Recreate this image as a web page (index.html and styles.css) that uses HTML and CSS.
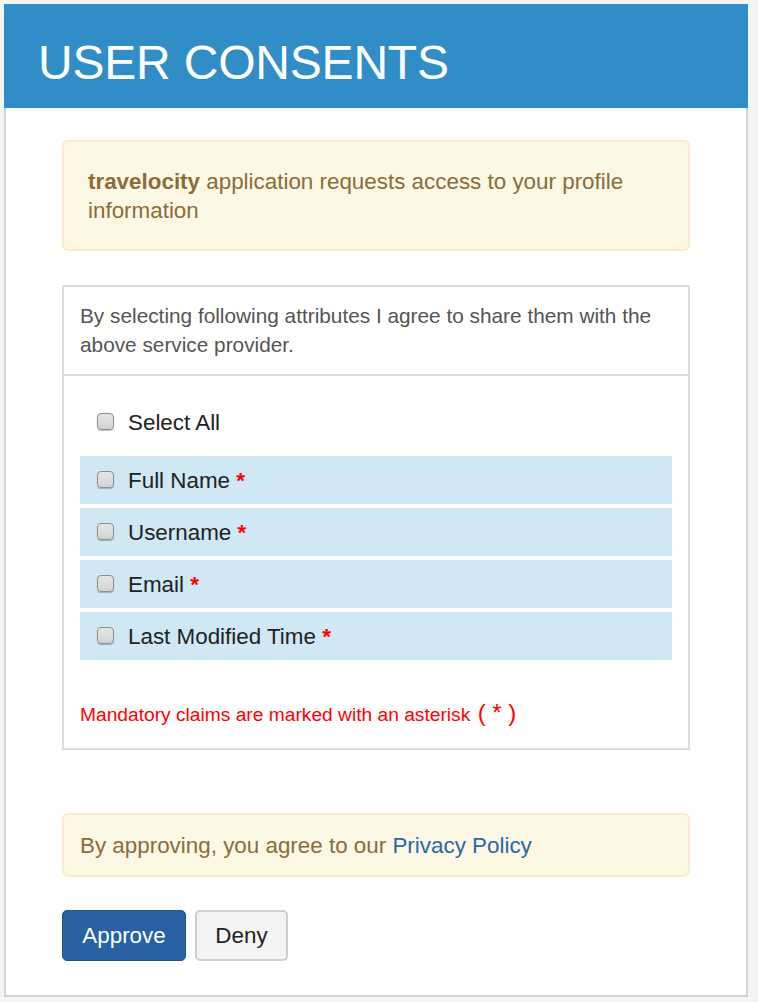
FILE: index.html
```html
<!DOCTYPE html>
<html lang="en">
<head>
<meta charset="utf-8">
<title>User Consents</title>
<link rel="stylesheet" href="styles.css">
</head>
<body>
<div class="page">
  <header class="header">
    <h1 class="title">USER CONSENTS</h1>
  </header>
  <main class="card">
    <div class="alert alert-request">
      <strong>travelocity</strong> application requests access to your profile information
    </div>

    <section class="consent-panel">
      <div class="consent-heading">
        By selecting following attributes I agree to share them with the above service provider.
      </div>
      <div class="consent-body">
        <label class="claim claim-all">
          <span class="checkbox"></span>
          <span class="claim-label">Select All</span>
        </label>
        <div class="claim-list">
          <label class="claim claim-item">
            <span class="checkbox"></span>
            <span class="claim-label">Full Name <span class="req">*</span></span>
          </label>
          <label class="claim claim-item">
            <span class="checkbox"></span>
            <span class="claim-label">Username <span class="req">*</span></span>
          </label>
          <label class="claim claim-item">
            <span class="checkbox"></span>
            <span class="claim-label">Email <span class="req">*</span></span>
          </label>
          <label class="claim claim-item">
            <span class="checkbox"></span>
            <span class="claim-label">Last Modified Time <span class="req">*</span></span>
          </label>
        </div>
        <p class="mandatory">Mandatory claims are marked with an asterisk <span class="paren">( * )</span></p>
      </div>
    </section>

    <div class="alert alert-policy">
      By approving, you agree to our <a class="link" href="#">Privacy Policy</a>
    </div>

    <div class="actions">
      <button class="btn btn-primary" type="button">Approve</button>
      <button class="btn btn-default" type="button">Deny</button>
    </div>
  </main>
</div>
</body>
</html>
```

FILE: styles.css
```css
html, body {
  margin: 0;
  padding: 0;
}

body {
  background: #f4f4f4;
  font-family: "Liberation Sans", Arial, Helvetica, sans-serif;
  font-size: 22.4px;
  line-height: 29px;
  color: #333;
}

.page {
  margin: 4px 0 0 4px;
  width: 744px;
}

.header {
  background: #318dc6;
  height: 104px;
  box-sizing: border-box;
  padding: 35px 0 0 34px;
}

.title {
  margin: 0;
  font-size: 48px;
  font-weight: normal;
  line-height: 1;
  color: #fff;
  letter-spacing: -0.2px;
}

.card {
  display: block;
  background: #fff;
  border: 2px solid #d2d2d2;
  border-top: none;
  padding: 32px 56px 34px;
}

.alert {
  border: 2px solid #faebcc;
  border-radius: 6px;
  background: #fcf8e3;
  color: #8a6d3b;
}

.alert-request {
  padding: 25px 24px 24px;
  margin-bottom: 34px;
}

.alert-request strong {
  font-weight: bold;
}

.consent-panel {
  border: 2px solid #dcdcdc;
  margin-bottom: 63px;
}

.consent-heading {
  padding: 14px 16px 15px;
  border-bottom: 2px solid #dcdcdc;
  color: #555;
  font-size: 20.8px;
}

.consent-body {
  padding: 22px 16px 19px;
}

.claim {
  display: flex;
  align-items: center;
  height: 48px;
  padding: 0 17px;
  color: #222;
}

.claim-all {
  margin-bottom: 10px;
}

.claim-list {
  display: flex;
  flex-direction: column;
  gap: 4px;
}

.claim-item {
  background: #d0e8f4;
}

.checkbox {
  width: 15px;
  height: 15px;
  flex: none;
  border: 1px solid #8e8e8e;
  border-radius: 4px;
  background: linear-gradient(#e6e6e6, #d2d2d2);
  box-shadow: 0 1px 1px rgba(0, 0, 0, 0.25);
  margin-right: 14px;
  position: relative;
  top: -1px;
}

.req {
  color: #f00;
  font-weight: bold;
}

.mandatory {
  margin: 38px 0 0;
  color: #f00;
  font-size: 19.2px;
  line-height: 29px;
}

.paren {
  font-size: 24px;
  margin-left: 2px;
}

.alert-policy {
  padding: 16px 16px 15px;
  margin-bottom: 33px;
}

.link {
  color: #2a69a9;
  text-decoration: none;
}

.actions {
  display: flex;
  gap: 9px;
}

.btn {
  font-family: inherit;
  font-size: 22.4px;
  line-height: 29px;
  border-radius: 5px;
  height: 51px;
  cursor: pointer;
  margin: 0;
  padding: 0;
}

.btn-primary {
  background: #2862a5;
  border: 1px solid #20528c;
  color: #fff;
  width: 124px;
}

.btn-default {
  background: #f4f4f4;
  border: 2px solid #cfcfcf;
  color: #222;
  width: 93px;
}
```
